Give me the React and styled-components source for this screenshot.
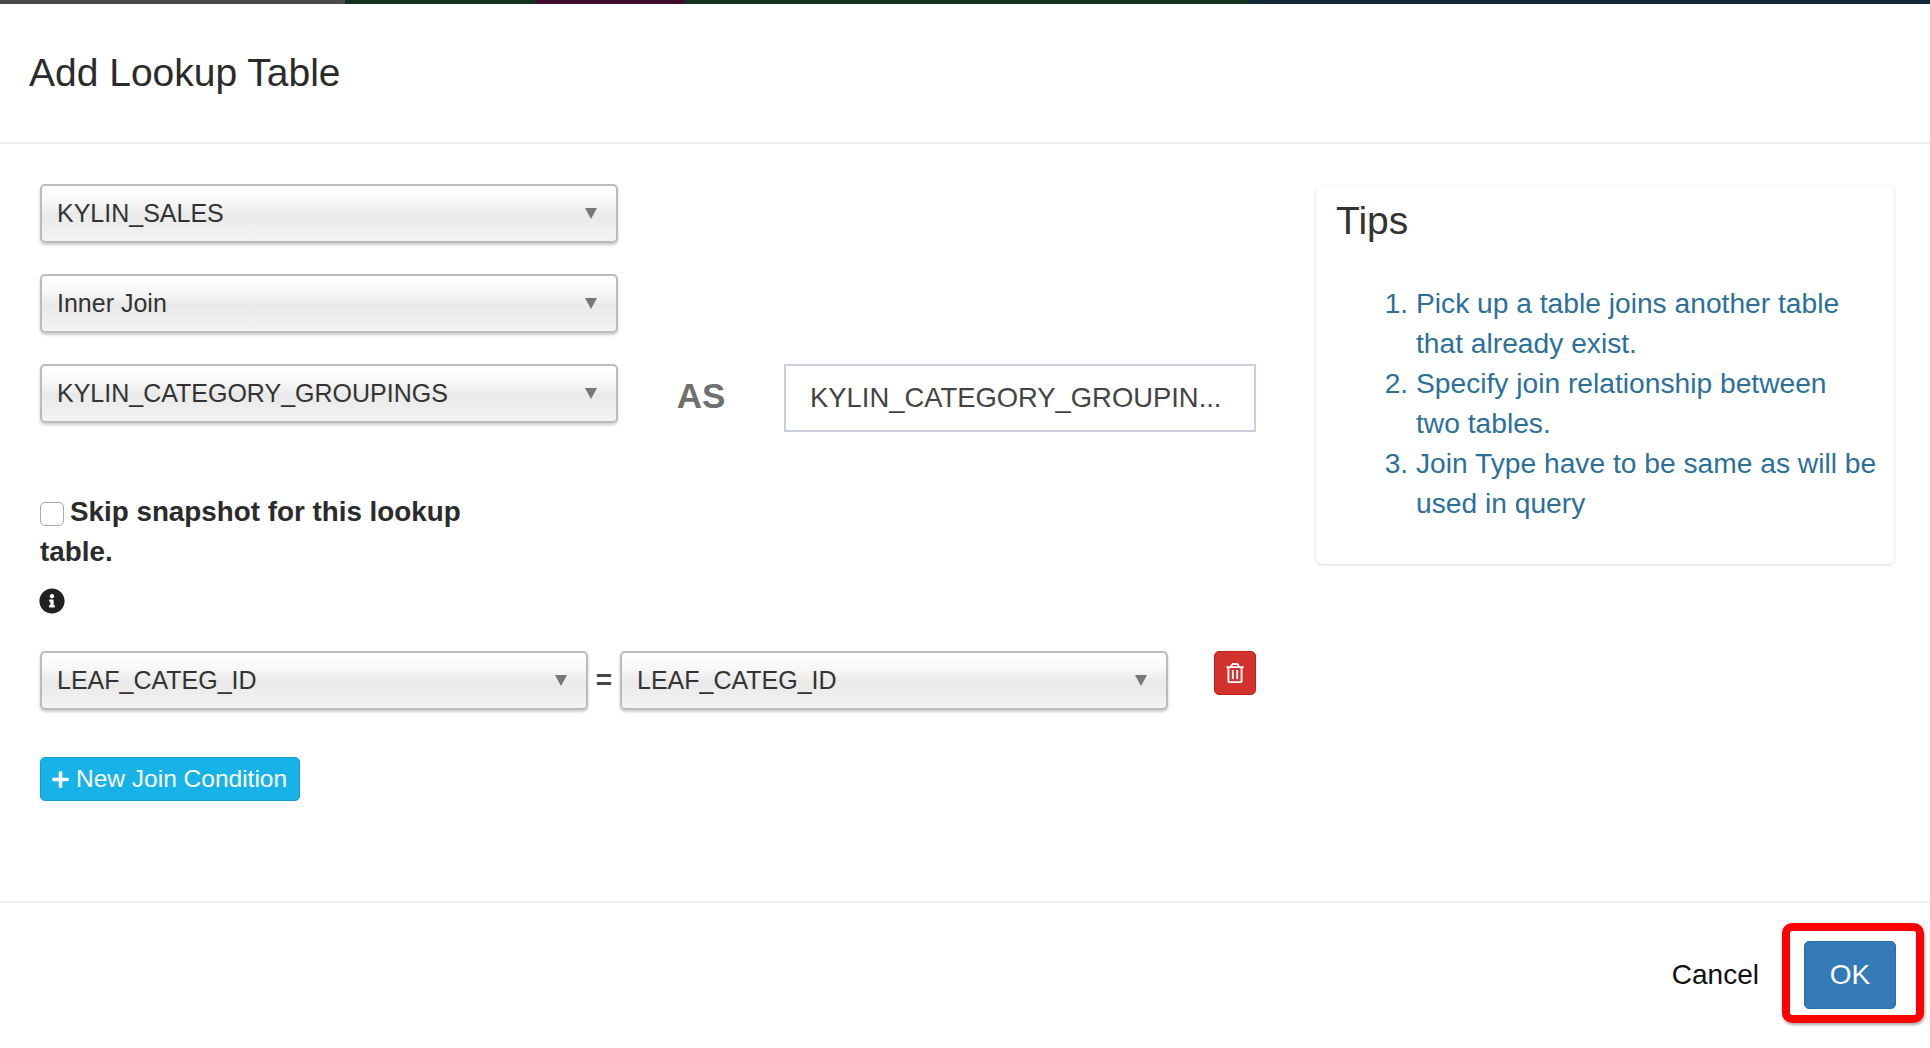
import React from 'react';
import styled, { createGlobalStyle } from 'styled-components';
import { FaInfoCircle, FaPlus, FaRegTrashAlt } from 'react-icons/fa';

const GlobalStyle = createGlobalStyle`
  html, body {
    margin: 0;
    padding: 0;
    background: #fff;
  }
  body {
    font-family: "Liberation Sans", Arial, sans-serif;
    color: #333;
  }
`;

const Page = styled.div`
  width: 1930px;
  height: 1048px;
  overflow: hidden;
  display: flex;
  flex-direction: column;
  background: #fff;
`;

const TopStrip = styled.div`
  height: 4px;
  flex: none;
  background: linear-gradient(
    to right,
    #4a4a4a 0 345px,
    #12311f 345px 535px,
    #3f0a2c 535px 685px,
    #12311f 685px 1250px,
    #10263a 1250px
  );
`;

const Header = styled.header`
  height: 140px;
  flex: none;
  box-sizing: border-box;
  padding: 0 29px;
  display: flex;
  align-items: center;
  border-bottom: 2px solid #eee;
`;

const Title = styled.h4`
  margin: 0;
  font-size: 39px;
  font-weight: 400;
  color: #2b2b2b;
`;

const Body = styled.main`
  height: 759px;
  flex: none;
  box-sizing: border-box;
  padding: 40px 36px 0 40px;
  display: flex;
  justify-content: space-between;
  align-items: flex-start;
  border-bottom: 2px solid #eee;
`;

const FormColumn = styled.div`
  width: 1216px;
  display: flex;
  flex-direction: column;
`;

const Row = styled.div`
  display: flex;
  align-items: flex-start;
  margin-bottom: ${(p) => p.$gap || 31}px;
`;

const Select = styled.div`
  width: ${(p) => p.$width}px;
  height: 59px;
  flex: none;
  box-sizing: border-box;
  padding: 0 19px 0 15px;
  display: flex;
  align-items: center;
  justify-content: space-between;
  font-size: 25px;
  color: #333;
  border: 2px solid #bbb;
  border-radius: 5px;
  background: linear-gradient(to bottom, #fff 0%, #f7f7f7 30%, #e9e9e9 52%, #f3f3f3 100%);
  box-shadow: 0 2px 3px rgba(0, 0, 0, 0.2);
`;

const Arrow = styled.span`
  width: 0;
  height: 0;
  border-left: 6px solid transparent;
  border-right: 6px solid transparent;
  border-top: 11px solid #777;
`;

const AsLabel = styled.span`
  width: 166px;
  flex: none;
  padding-top: 12px;
  text-align: center;
  font-size: 35px;
  font-weight: 700;
  color: #6f6f6f;
`;

const AliasInput = styled.div`
  width: 472px;
  height: 68px;
  flex: none;
  box-sizing: border-box;
  padding: 0 24px;
  display: flex;
  align-items: center;
  font-size: 27.4px;
  color: #444;
  border: 2px solid #c9cfdc;
  background: #fff;
  white-space: nowrap;
`;

const SkipLabel = styled.div`
  width: 460px;
  margin-top: 59px;
  font-size: 27.8px;
  line-height: 40px;
  font-weight: 700;
  color: #2b2b2b;
`;

const CheckBox = styled.span`
  display: inline-block;
  width: 24px;
  height: 24px;
  box-sizing: border-box;
  margin-right: 6px;
  vertical-align: -5px;
  border: 1px solid #aaa;
  border-radius: 5px;
  background: #fff;
`;

const InfoLine = styled.div`
  height: 24px;
  margin-top: 16px;
  margin-bottom: 39px;
  margin-left: -1px;
  font-size: 26px;
  line-height: 24px;
  color: #222;
`;

const Equals = styled.span`
  width: 32px;
  flex: none;
  padding-top: 13px;
  text-align: center;
  font-size: 28px;
  font-weight: 700;
  color: #444;
`;

const DeleteButton = styled.button`
  width: 42px;
  height: 44px;
  margin-left: 46px;
  padding: 0;
  display: flex;
  align-items: center;
  justify-content: center;
  font-size: 20px;
  color: #fff;
  background: #d2322d;
  border: 1px solid #c9201c;
  border-radius: 5px;
`;

const AddButton = styled.button`
  width: 260px;
  height: 44px;
  padding: 0 0 0 10px;
  display: flex;
  align-items: center;
  gap: 6px;
  font-family: inherit;
  font-size: 24.5px;
  color: #fff;
  background: #17b2e8;
  border: 1px solid #129ccf;
  border-radius: 5px;
`;

const TipsCard = styled.aside`
  width: 578px;
  height: 379px;
  margin-top: 1px;
  box-sizing: border-box;
  padding: 16px 16px 14px 20px;
  background: #fff;
  border-radius: 6px;
  box-shadow: 0 1px 3px rgba(0, 0, 0, 0.16);
`;

const TipsTitle = styled.h4`
  margin: 0;
  font-size: 39px;
  line-height: 40px;
  font-weight: 400;
  color: #333;
`;

const TipsList = styled.ol`
  margin: 42px 0 0;
  padding-left: 80px;
  font-size: 28.2px;
  line-height: 40px;
  color: #2c7099;
`;

const Footer = styled.footer`
  flex: 1;
  box-sizing: border-box;
  padding: 20px 6px 0 0;
  display: flex;
  align-items: flex-start;
  justify-content: flex-end;
`;

const CancelLink = styled.span`
  margin-right: 23px;
  height: 104px;
  display: flex;
  align-items: center;
  font-size: 28px;
  color: #111;
`;

const Highlight = styled.div`
  width: 142px;
  height: 100px;
  box-sizing: border-box;
  padding: 4px 6px 0 0;
  display: flex;
  align-items: center;
  justify-content: center;
  border: 8px solid #f00;
  border-radius: 10px;
  box-shadow: 1px 2px 3px rgba(0, 0, 0, 0.35);
`;

const OkButton = styled.button`
  width: 92px;
  height: 68px;
  padding: 0;
  font-family: inherit;
  font-size: 28px;
  color: #fff;
  background: #337ab7;
  border: 1px solid #2e6da4;
  border-radius: 5px;
`;

function Dropdown({ width, children }) {
  return (
    <Select $width={width}>
      <span>{children}</span>
      <Arrow />
    </Select>
  );
}

const tips = [
  'Pick up a table joins another table that already exist.',
  'Specify join relationship between two tables.',
  'Join Type have to be same as will be used in query',
];

export default function App() {
  return (
    <Page>
      <GlobalStyle />
      <TopStrip />
      <Header>
        <Title>Add Lookup Table</Title>
      </Header>
      <Body>
        <FormColumn>
          <Row>
            <Dropdown width={578}>KYLIN_SALES</Dropdown>
          </Row>
          <Row>
            <Dropdown width={578}>Inner Join</Dropdown>
          </Row>
          <Row $gap={1}>
            <Dropdown width={578}>KYLIN_CATEGORY_GROUPINGS</Dropdown>
            <AsLabel>AS</AsLabel>
            <AliasInput>KYLIN_CATEGORY_GROUPIN...</AliasInput>
          </Row>
          <SkipLabel>
            <CheckBox />
            Skip snapshot for this lookup table.
          </SkipLabel>
          <InfoLine>
            <FaInfoCircle />
          </InfoLine>
          <Row $gap={47}>
            <Dropdown width={548}>LEAF_CATEG_ID</Dropdown>
            <Equals>=</Equals>
            <Dropdown width={548}>LEAF_CATEG_ID</Dropdown>
            <DeleteButton>
              <FaRegTrashAlt />
            </DeleteButton>
          </Row>
          <div>
            <AddButton>
              <FaPlus size={19} />
              New Join Condition
            </AddButton>
          </div>
        </FormColumn>
        <TipsCard>
          <TipsTitle>Tips</TipsTitle>
          <TipsList>
            {tips.map((tip) => (
              <li key={tip}>{tip}</li>
            ))}
          </TipsList>
        </TipsCard>
      </Body>
      <Footer>
        <CancelLink>Cancel</CancelLink>
        <Highlight>
          <OkButton>OK</OkButton>
        </Highlight>
      </Footer>
    </Page>
  );
}
